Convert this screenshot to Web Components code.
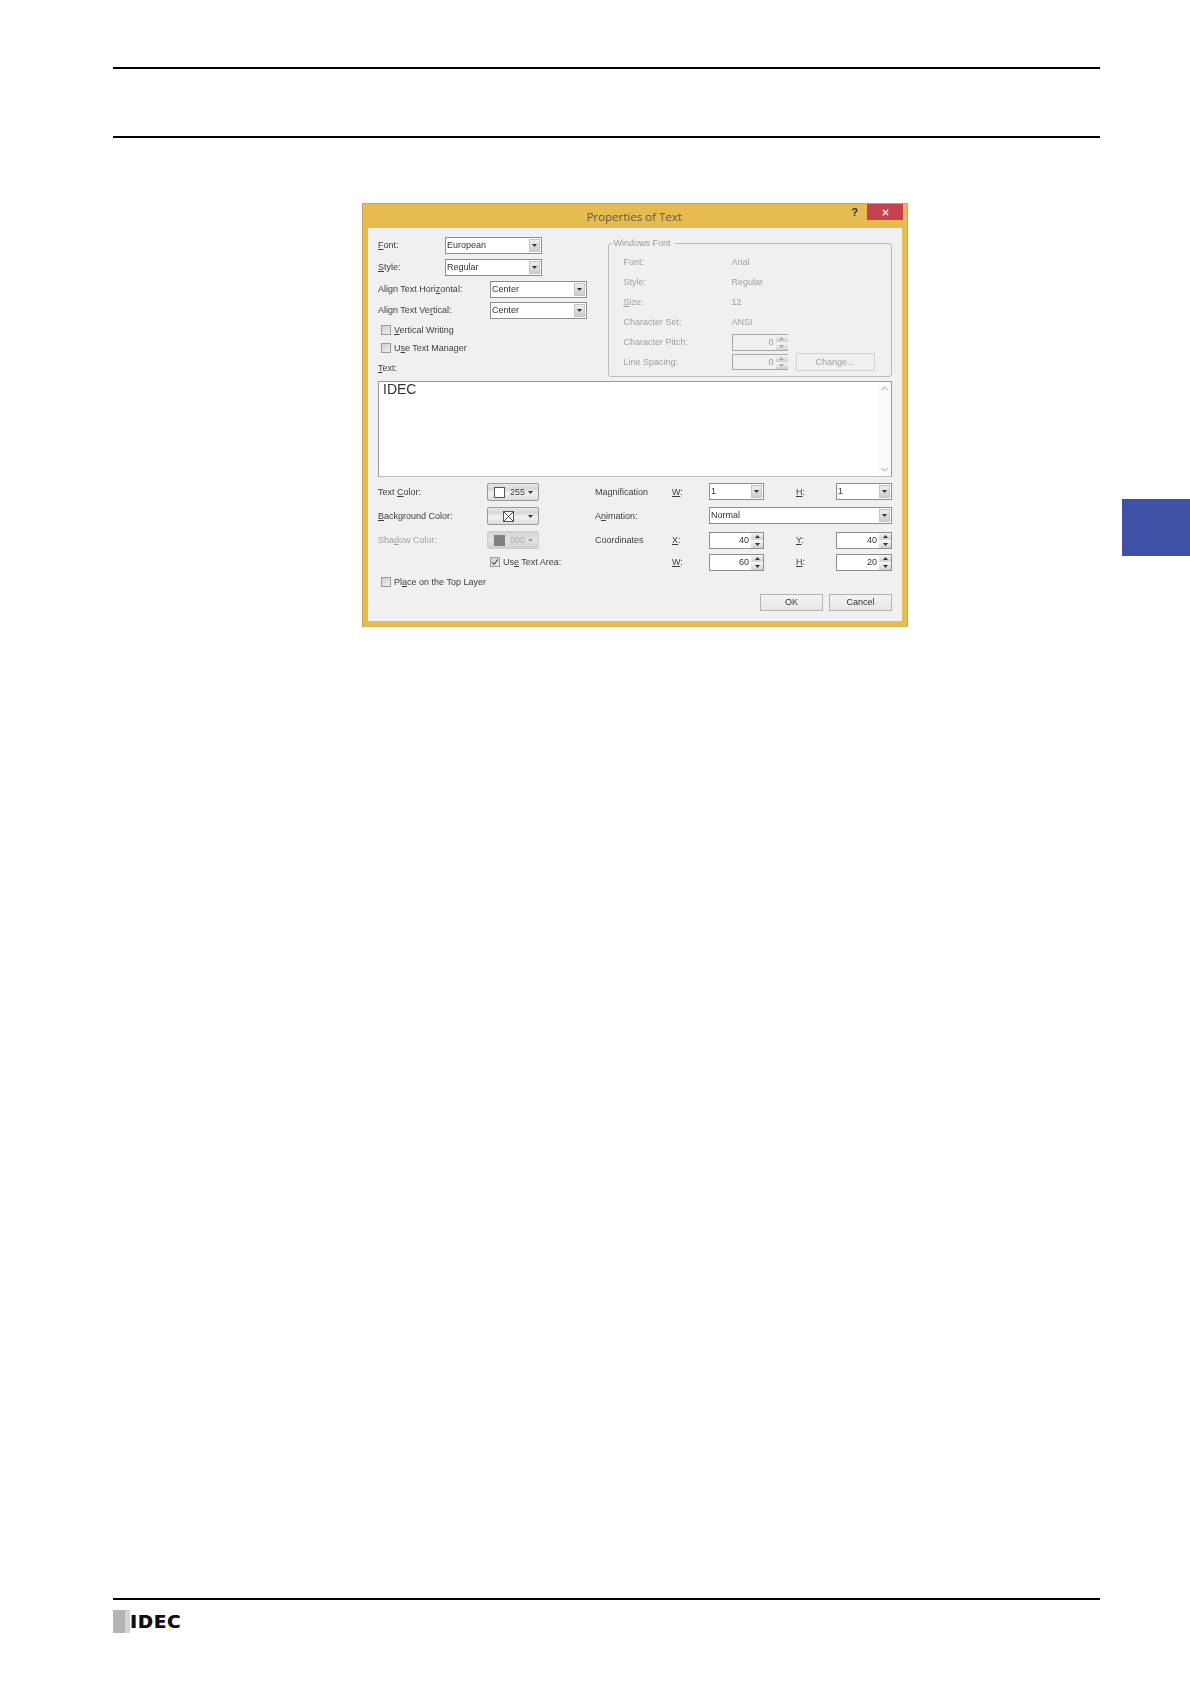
<!DOCTYPE html>
<html lang="en">
<head>
<meta charset="utf-8">
<title>Properties of Text</title>
<style>
  html, body { margin: 0; background: #fff; }
</style>
</head>
<body>
<manual-page>
  <page-header slot="header"></page-header>
  <text-properties-dialog></text-properties-dialog>
  <section-tab></section-tab>
  <page-footer slot="footer"></page-footer>
</manual-page>

<script>
/**
 * Small helpers shared by the components
 */
const ARROW = `<svg width="7" height="4" viewBox="0 0 7 4"><path d="M0 0h7L3.5 4z" fill="currentColor"/></svg>`;
const SPIN_UP = `<svg width="5" height="3" viewBox="0 0 5 3"><path d="M0 3h5L2.5 0z" fill="currentColor"/></svg>`;
const SPIN_DOWN = `<svg width="5" height="3" viewBox="0 0 5 3"><path d="M0 0h5L2.5 3z" fill="currentColor"/></svg>`;

class ShadowBase extends HTMLElement {
  constructor() {
    super();
    this.attachShadow({ mode: 'open' });
  }
  connectedCallback() {
    this.render();
  }
}

// Whole sheet of the manual page
class ManualPage extends ShadowBase {
  render() {
    this.shadowRoot.innerHTML = `
      <style>
        :host { display: block; }
        .sheet {
          position: relative;
          box-sizing: border-box;
          display: flex;
          flex-direction: column;
          height: 1684px;
          padding: 67px 90px 51px 113px;
        }
        .foot { margin-top: auto; }
      </style>
      <div class="sheet">
        <slot name="header"></slot>
        <slot></slot>
        <div class="foot"><slot name="footer"></slot></div>
      </div>`;
  }
}

class PageHeader extends ShadowBase {
  render() {
    this.shadowRoot.innerHTML = `
      <style>
        :host {
          display: block;
          box-sizing: border-box;
          height: 71px;
          border-top: 2px solid #000;
          border-bottom: 2px solid #000;
        }
      </style>`;
  }
}

class PageFooter extends ShadowBase {
  render() {
    this.shadowRoot.innerHTML = `
      <style>
        :host {
          display: block;
          border-top: 2px solid #000;
          padding-top: 10px;
        }
        .logo { display: flex; height: 23px; align-items: center; }
        .mark { width: 12px; height: 23px; background: #b4b4b4; border-right: 5px solid #d4d4d4; }
        .name {
          font: bold 18px/23px "DejaVu Sans", sans-serif;
          color: #111;
          letter-spacing: 1px;
          text-shadow: .5px 0 #111;
        }
      </style>
      <div class="logo"><div class="mark"></div><div class="name">IDEC</div></div>`;
  }
}

// Blue thumb index on the page edge
class SectionTab extends ShadowBase {
  render() {
    this.shadowRoot.innerHTML = `
      <style>
        :host {
          position: absolute;
          top: 499px;
          right: 0;
          width: 68px;
          height: 57px;
          background: #4052a7;
        }
      </style>`;
  }
}

// Combo box: text field with drop arrow
class UiCombo extends ShadowBase {
  render() {
    this.shadowRoot.innerHTML = `
      <style>
        :host {
          display: flex;
          box-sizing: border-box;
          align-items: center;
          justify-content: space-between;
          height: 17px;
          width: var(--w, 97px);
          background: #fff;
          border: 1px solid #8e8e8e;
          padding: 0 1px 0 1px;
          color: #333;
        }
        .btn {
          display: flex;
          align-items: center;
          justify-content: center;
          width: 11px;
          height: 13px;
          color: #333;
          background: linear-gradient(#eeeeee, #cdcdcd);
          border: 1px solid #c4c4c4;
          box-sizing: border-box;
        }
        svg { width: 5px; height: 3px; }
      </style>
      <span><slot></slot></span>
      <span class="btn">${ARROW}</span>`;
  }
}

// Numeric field with up/down buttons
class UiSpin extends ShadowBase {
  render() {
    const off = this.hasAttribute('disabled');
    this.shadowRoot.innerHTML = `
      <style>
        :host {
          display: flex;
          box-sizing: border-box;
          align-items: stretch;
          height: 17px;
          width: var(--w, 55px);
          background: ${off ? '#f0f0f0' : '#fff'};
          border: 1px solid ${off ? '#a8a8a8' : '#8e8e8e'};
          border-right: ${off ? 'none' : '1px solid #8e8e8e'};
          color: ${off ? '#999' : '#333'};
        }
        .val { flex: 1; text-align: right; padding-right: 2px; line-height: 15px; }
        .arrows { display: flex; flex-direction: column; width: 12px; gap: 1px; }
        .arrows span {
          flex: 1;
          display: flex;
          align-items: center;
          justify-content: center;
          background: linear-gradient(#f4f4f4, #d0d0d0);
          color: ${off ? '#aaa' : '#333'};
        }
      </style>
      <span class="val"><slot></slot></span>
      <span class="arrows"><span>${SPIN_UP}</span><span>${SPIN_DOWN}</span></span>`;
  }
}

class UiCheck extends ShadowBase {
  render() {
    const on = this.hasAttribute('checked');
    this.shadowRoot.innerHTML = `
      <style>
        :host { display: flex; align-items: center; gap: 3px; }
        .box {
          box-sizing: border-box;
          width: 10px;
          height: 10px;
          border: 1px solid #9a9a9a;
          background: linear-gradient(135deg, #cfcfcf, #efefef);
          display: flex;
        }
        svg { width: 8px; height: 8px; }
      </style>
      <span class="box">${on ? '<svg viewBox="0 0 8 8"><path d="M1.2 4.2 3.2 6.4 6.8 1.4" fill="none" stroke="#555" stroke-width="1.2"/></svg>' : ''}</span>
      <span><slot></slot></span>`;
  }
}

// Windows push button
class UiButton extends ShadowBase {
  render() {
    const off = this.hasAttribute('disabled');
    this.shadowRoot.innerHTML = `
      <style>
        :host {
          display: flex;
          box-sizing: border-box;
          align-items: center;
          justify-content: center;
          width: 63px;
          height: 17px;
          border: 1px solid ${off ? '#d2d2d2' : '#b4b4b4'};
          background: ${off ? '#f0f0f0' : 'linear-gradient(#f3f3f3, #e6e6e6)'};
          color: ${off ? '#a0a0a0' : '#333'};
        }
      </style>
      <slot></slot>`;
  }
}

// Colour picker drop-down button
class UiColorButton extends ShadowBase {
  render() {
    const kind = this.getAttribute('swatch') || 'white';
    const off = this.hasAttribute('disabled');
    let swatch = `<svg width="11" height="11" viewBox="0 0 11 11"><rect x=".5" y=".5" width="10" height="10" fill="#fff" stroke="#555"/></svg>`;
    if (kind === 'none') {
      swatch = `<svg width="11" height="11" viewBox="0 0 11 11"><rect x=".5" y=".5" width="10" height="10" fill="#fff" stroke="#555"/><path d="M.5.5l10 10M10.5.5l-10 10" stroke="#555" fill="none"/></svg>`;
    }
    if (kind === 'grey') {
      swatch = `<svg width="11" height="11" viewBox="0 0 11 11"><rect width="11" height="11" fill="#808080"/></svg>`;
    }
    this.shadowRoot.innerHTML = `
      <style>
        :host {
          display: flex;
          box-sizing: border-box;
          align-items: center;
          width: 52px;
          height: 18px;
          padding: 0 5px 0 6px;
          border: 1px solid ${off ? '#cfcfcf' : '#9a9a9a'};
          border-radius: 2px;
          background: ${off ? 'linear-gradient(#d4d4d4, #e2e2e2 50%, #d0d0d0)' : 'linear-gradient(#e8e8e8, #d8d8d8 30%, #f2f2f2 55%, #dcdcdc)'};
          color: ${off ? '#aaa' : '#444'};
        }
        .val { flex: 1; padding-left: 5px; font-size: 9px; }
        .drop { display: flex; color: ${off ? '#999' : '#333'}; }
        .swatch { display: flex; ${kind === 'none' ? 'margin-left: 9px;' : ''} }
        .drop svg { width: 5px; height: 3px; }
      </style>
      <span class="swatch">${swatch}</span>
      <span class="val"><slot></slot></span>
      <span class="drop">${ARROW}</span>`;
  }
}

// Scrollable edit box of the dialog
class UiTextArea extends ShadowBase {
  render() {
    this.shadowRoot.innerHTML = `
      <style>
        :host {
          display: flex;
          box-sizing: border-box;
          height: 96px;
          background: #fff;
          border: 1px solid #9a9a9a;
          border-bottom-color: #bdbdbd;
        }
        .txt {
          flex: 1;
          padding: 0 4px;
          font: 14px/15px "Liberation Sans", sans-serif;
          color: #333;
        }
        .bar {
          width: 13px;
          background: #fbfbfb;
          display: flex;
          flex-direction: column;
          justify-content: space-between;
          align-items: center;
          padding: 4px 0;
          color: #c0c0c0;
        }
        svg { display: block; }
      </style>
      <div class="txt"><slot></slot></div>
      <div class="bar">
        <svg width="7" height="5" viewBox="0 0 7 5"><path d="M.5 4 3.5 1l3 3" fill="none" stroke="currentColor" stroke-width="1.2"/></svg>
        <svg width="7" height="5" viewBox="0 0 7 5"><path d="M.5 1l3 3 3-3" fill="none" stroke="currentColor" stroke-width="1.2"/></svg>
      </div>`;
  }
}

// Labelled group frame, with the legend sitting on the frame line
class UiGroup extends ShadowBase {
  render() {
    this.shadowRoot.innerHTML = `
      <style>
        :host { display: block; padding-top: 6px; }
        .frame {
          position: relative;
          box-sizing: border-box;
          height: 134px;
          border: 1px solid #bcbcbc;
          border-radius: 3px;
          padding: 8px 0 0 15px;
        }
        .legend {
          position: absolute;
          top: -7px;
          left: 3px;
          padding: 0 4px 0 2px;
          line-height: 13px;
          background: #f0f0f0;
          color: #9b9b9b;
        }
      </style>
      <div class="frame">
        <span class="legend">${this.getAttribute('legend') || ''}</span>
        <slot></slot>
      </div>`;
  }
}

// The dialog itself
class TextPropertiesDialog extends ShadowBase {
  render() {
    this.shadowRoot.innerHTML = `
      <style>
        :host {
          display: block;
          box-sizing: border-box;
          width: 546px;
          height: 424px;
          margin: 65px 0 0 249px;
          background: #e6bb4f;
          border: 1px solid #c9a648;
          border-bottom-color: #dcb552;
          font: 9px/13px "Liberation Sans", sans-serif;
          color: #3e3e3e;
          --off: #a0a0a0;
        }
        u { text-decoration-thickness: 1px; text-underline-offset: 1px; }

        .titlebar {
          display: flex;
          align-items: center;
          height: 24px;
          position: relative;
        }
        .title {
          flex: 1;
          text-align: center;
          font: 11.5px/24px "Open Sans", sans-serif;
          color: #5f5b4a;
          margin-top: 2px;
          margin-left: 54px;
        }
        .help {
          font: bold 11px/16px "Liberation Sans", sans-serif;
          color: #333;
          margin: -8px 9px 0 0;
        }
        .close {
          display: flex;
          align-items: center;
          justify-content: center;
          width: 36px;
          height: 16px;
          margin: -8px 4px 0 0;
          background: #c7404e;
        }

        .client {
          box-sizing: border-box;
          height: 393px;
          margin: 0 5px;
          padding: 9px 10px 0;
          background: #f0f0f0;
          filter: blur(.3px);
        }

        .top { display: flex; height: 144px; }
        .left { width: 230px; }
        .group { width: 285px; }

        .row { display: flex; align-items: center; height: 17px; margin-bottom: 5px; }
        .row.tight { margin-bottom: 4px; }
        .lab-a { width: 67px; }
        .lab-b { width: 112px; }
        .chk { height: 18px; margin: 0 0 0 3px; }
        .chk-first { margin-top: 2px; }
        .textlabel { height: 18px; line-height: 18px; margin-top: 2px; }

        .gbox {
          display: grid;
          grid-template-columns: 108px 1fr;
          grid-auto-rows: 20px;
          align-items: center;
          color: var(--off);
        }
        .gbox .with-btn { display: flex; align-items: center; gap: 8px; }
        .gbox ui-button { width: 79px; height: 18px; }
        .gbox ui-spin { --w: 56px; }
        .gbox .s2 { height: 16px; }

        .bottom {
          display: grid;
          grid-template-columns: 109px 108px 77px 37px 55px 32px 40px 56px;
          grid-template-rows: 24px 24px 24px 20px 20px;
          align-items: center;
          margin-top: 3px;
        }
        .bottom .off { color: var(--off); }
        .bottom ui-combo { margin-bottom: 2px; }
        .anim { grid-column: 5 / 9; --w: 183px; }
        .usearea { grid-column: 2 / 3; margin-left: 3px; grid-row: 4; }
        .place { grid-column: 1 / 4; margin-left: 3px; grid-row: 5; }

        .actions { display: flex; justify-content: flex-end; gap: 6px; margin-top: 2px; }
      </style>

      <div class="titlebar">
        <div class="title">Properties of Text</div>
        <div class="help">?</div>
        <div class="close">
          <svg width="7" height="7" viewBox="0 0 7 7"><path d="M.8.8l5.4 5.4M6.2.8.8 6.2" stroke="#fff" stroke-width="1.3" fill="none"/></svg>
        </div>
      </div>

      <div class="client">
        <div class="top">
          <div class="left">
            <div class="row"><span class="lab-a"><u>F</u>ont:</span><ui-combo>European</ui-combo></div>
            <div class="row"><span class="lab-a"><u>S</u>tyle:</span><ui-combo>Regular</ui-combo></div>
            <div class="row tight"><span class="lab-b">Align Text Hori<u>z</u>ontal:</span><ui-combo>Center</ui-combo></div>
            <div class="row" style="margin:0"><span class="lab-b">Align Text Ve<u>r</u>tical:</span><ui-combo>Center</ui-combo></div>
            <ui-check class="chk chk-first"><u>V</u>ertical Writing</ui-check>
            <ui-check class="chk">U<u>s</u>e Text Manager</ui-check>
            <div class="textlabel"><u>T</u>ext:</div>
          </div>
          <ui-group class="group" legend="Windows Font">
            <div class="gbox">
              <span>Font:</span><span>Arial</span>
              <span>Style:</span><span>Regular</span>
              <span><u>S</u>ize:</span><span>12</span>
              <span>Character Set:</span><span>ANSI</span>
              <span>Character Pitch:</span><ui-spin disabled>0</ui-spin>
              <span>Line Spacing:</span>
              <div class="with-btn"><ui-spin class="s2" disabled>0</ui-spin><ui-button disabled>Chan<u>g</u>e...</ui-button></div>
            </div>
          </ui-group>
        </div>

        <ui-text-area>IDEC</ui-text-area>

        <div class="bottom">
          <span>Text <u>C</u>olor:</span>
          <ui-color-button style="grid-column:2">255</ui-color-button>
          <span>Magnification</span>
          <span><u>W</u>:</span>
          <ui-combo style="--w:55px">1</ui-combo>
          <span></span>
          <span><u>H</u>:</span>
          <ui-combo style="--w:56px">1</ui-combo>

          <span><u>B</u>ackground Color:</span>
          <ui-color-button swatch="none"></ui-color-button>
          <span style="grid-column:3">A<u>n</u>imation:</span>
          <ui-combo class="anim">Normal</ui-combo>

          <span class="off">Sha<u>d</u>ow Color:</span>
          <ui-color-button swatch="grey" disabled>000</ui-color-button>
          <span>Coordinates</span>
          <span><u>X</u>:</span>
          <ui-spin>40</ui-spin>
          <span></span>
          <span><u>Y</u>:</span>
          <ui-spin style="--w:56px">40</ui-spin>

          <ui-check class="usearea" checked>Us<u>e</u> Text Area:</ui-check>
          <span style="grid-column:4;grid-row:4"><u>W</u>:</span>
          <ui-spin style="grid-column:5;grid-row:4">60</ui-spin>
          <span style="grid-column:7;grid-row:4"><u>H</u>:</span>
          <ui-spin style="grid-column:8;grid-row:4;--w:56px">20</ui-spin>

          <ui-check class="place">Pl<u>a</u>ce on the Top Layer</ui-check>
        </div>

        <div class="actions">
          <ui-button>OK</ui-button>
          <ui-button>Cancel</ui-button>
        </div>
      </div>`;
  }
}

customElements.define('manual-page', ManualPage);
customElements.define('page-header', PageHeader);
customElements.define('page-footer', PageFooter);
customElements.define('section-tab', SectionTab);
customElements.define('ui-combo', UiCombo);
customElements.define('ui-spin', UiSpin);
customElements.define('ui-check', UiCheck);
customElements.define('ui-button', UiButton);
customElements.define('ui-color-button', UiColorButton);
customElements.define('ui-text-area', UiTextArea);
customElements.define('ui-group', UiGroup);
customElements.define('text-properties-dialog', TextPropertiesDialog);
</script>
</body>
</html>
